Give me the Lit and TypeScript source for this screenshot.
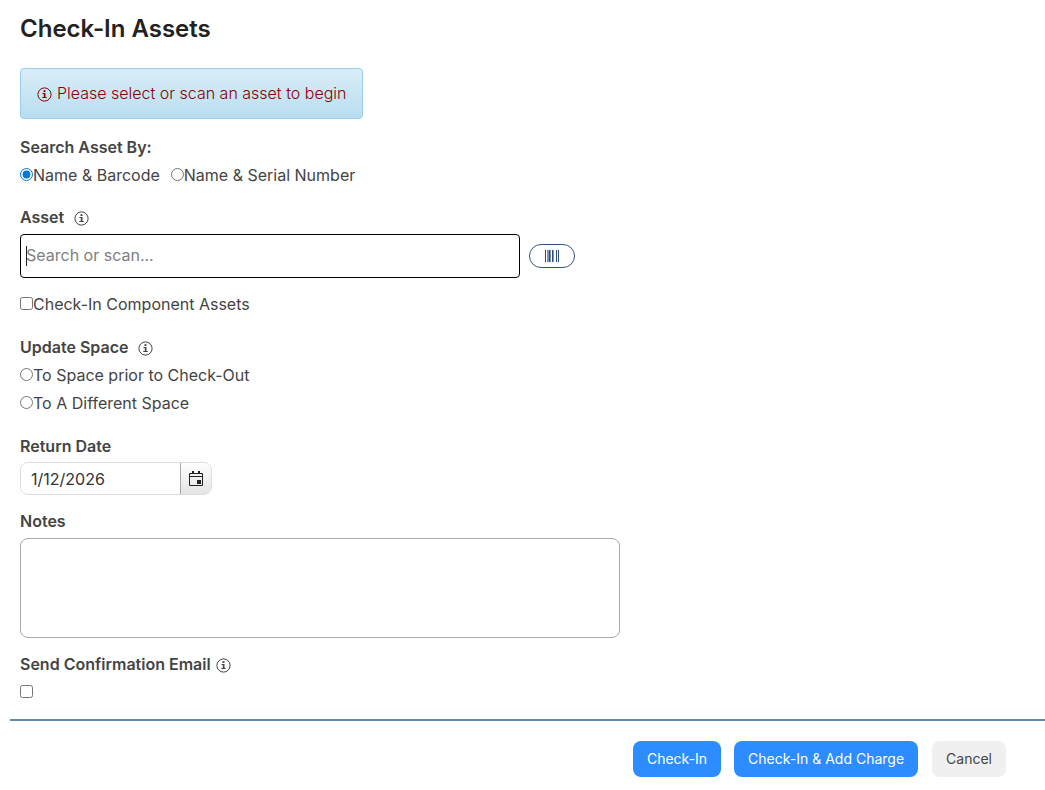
import { LitElement, html, css } from "lit";
import { customElement, state } from "lit/decorators.js";

@customElement("info-icon")
class InfoIcon extends LitElement {
  static styles = css`
    :host {
      display: inline-flex;
      color: inherit;
    }
    .glyph {
      display: block;
      width: 15px;
      height: 15px;
    }
  `;

  render() {
    return html`<svg class="glyph" viewBox="0 0 15 15" fill="none" aria-hidden="true">
      <circle cx="7.5" cy="7.5" r="6.6" stroke="currentColor" stroke-width="1" />
      <rect x="6.500" y="3.200" width="2" height="1.800" fill="currentColor" />
      <path d="M5.500 6H8.500V10H9.700V11H5.300V10H6.800V7H5.500Z" fill="currentColor" />
    </svg>`;
  }
}

@customElement("app-root")
class AppRoot extends LitElement {
  @state() private searchBy = "barcode";

  static styles = css`
    :host {
      display: block;
      font-family: Inter, "Liberation Sans", sans-serif;
      font-size: 16px;
      line-height: 28px;
      color: #444;
      background: #fff;
    }
    * {
      box-sizing: border-box;
    }
    .content {
      display: flex;
      flex-direction: column;
      padding: 13px 20px 13px;
    }
    .title {
      margin: 0 0 23px;
      font-size: 24px;
      line-height: 32px;
      font-weight: 600;
      color: #222;
    }
    .notice {
      display: flex;
      align-items: center;
      align-self: flex-start;
      gap: 5px;
      margin: 0 0 14px;
      padding: 10px 16px 11px;
      border: 1px solid #9acfea;
      border-radius: 4px;
      background: linear-gradient(#d9edf7, #b9def0);
      font-weight: 300;
      color: #8b0000;
    }
    .notice info-icon,
    .heading info-icon {
      position: relative;
      top: 1px;
    }
    .group {
      margin: 0 0 14px;
      padding: 0;
      border: 0;
      min-width: 0;
    }
    .heading {
      display: flex;
      align-items: center;
      gap: 10px;
      font-weight: 600;
    }
    .heading.tight {
      gap: 5px;
    }
    .field {
      margin-top: 3px;
    }
    .options {
      display: flex;
      gap: 11px;
    }
    .options.stacked {
      flex-direction: column;
      gap: 0;
    }
    .option {
      display: flex;
      align-items: center;
    }
    .option input {
      width: 13px;
      height: 13px;
      margin: 0 0 2px;
      flex: none;
      accent-color: #0078d7;
    }
    .search {
      display: flex;
      align-items: center;
      gap: 9px;
    }
    .search-input {
      flex: 0 1 500px;
      min-width: 0;
      height: 44px;
      padding: 0 5px 2px;
      border: 1px solid #000;
      border-radius: 4px;
      outline: none;
      font: inherit;
      color: #444;
      background: linear-gradient(#222, #222) 5px center / 1px 20px no-repeat #fff;
    }
    .search-input::placeholder {
      color: #808080;
      opacity: 1;
    }
    .scan {
      display: flex;
      align-items: center;
      justify-content: center;
      width: 46px;
      height: 24px;
      padding: 0;
      border: 1px solid #2f5683;
      border-radius: 12px;
      background: #fff;
      color: #2f4f7a;
    }
    .component {
      margin: 12px 0 15px;
    }
    .date {
      display: flex;
      width: 192px;
      height: 33px;
      margin-top: 2px;
      border: 1px solid #dcdcdc;
      border-radius: 8px;
      overflow: hidden;
    }
    .date-input {
      flex: 1;
      min-width: 0;
      padding: 0 10px;
      border: 0;
      outline: none;
      font: inherit;
      color: #333;
      background: #fff;
    }
    .date-button {
      display: flex;
      align-items: center;
      justify-content: center;
      width: 31px;
      padding: 0;
      border: 0;
      border-left: 1px solid #aaa;
      background: linear-gradient(#fdfdfd, #e4e4e4);
      color: #222;
    }
    .notes {
      display: block;
      width: 100%;
      max-width: 600px;
      height: 100px;
      padding: 8px;
      border: 1px solid #aaa;
      border-radius: 8px;
      outline: none;
      resize: none;
      font: inherit;
      color: #333;
    }
    .space {
      margin-bottom: 15px;
    }
    .compact {
      margin-bottom: 12px;
    }
    .last {
      margin-bottom: 0;
    }
    .footer {
      display: flex;
      justify-content: flex-end;
      margin-left: 10px;
      padding: 20px 39px 13px 0;
      border-top: 2px solid #5b8bb7;
    }
    .button {
      height: 36px;
      padding: 0 14px;
      border: 0;
      border-radius: 8px;
      font: 400 14px/20px Inter, "Liberation Sans", sans-serif;
      color: #fff;
      background: #2d8cff;
    }
    .button + .button {
      margin-left: 13px;
    }
    .button + .plain {
      margin-left: 14px;
      color: #444;
      background: #f0f0f0;
    }
  `;

  render() {
    return html`
      <form @submit=${(e: Event) => e.preventDefault()}>
        <div class="content">
          <h1 class="title">Check-In Assets</h1>
          <div class="notice" role="status">
            <info-icon></info-icon><span>Please select or scan an asset to begin</span>
          </div>

          <div class="group" role="radiogroup" aria-labelledby="search-by">
            <div class="heading" id="search-by">Search Asset By:</div>
            <div class="options">
              ${[
                ["barcode", "Name & Barcode"],
                ["serial", "Name & Serial Number"],
              ].map(
                ([value, text]) => html`<label class="option"
                  ><input
                    type="radio"
                    name="searchBy"
                    .value=${value}
                    .checked=${this.searchBy === value}
                    @change=${() => (this.searchBy = value)}
                  />${text}</label
                >`
              )}
            </div>
          </div>

          <div class="heading"><label for="asset">Asset</label><info-icon></info-icon></div>
          <div class="search field">
            <input class="search-input" id="asset" type="text" placeholder="Search or scan..." />
            <button class="scan" type="button" aria-label="Scan barcode">
              <svg width="16" height="12" viewBox="0 0 16 12" fill="currentColor" aria-hidden="true">
                <path d="M1 0h1v12h-1zM5 0h1v12h-1zM8 0h1v12h-1zM12 0h1v12h-1zM14 0h1v12h-1z" />
                <path d="M3 0h2v12h-2zM6 0h1v12h-1zM9 0h1v12h-1z" opacity="0.6" />
              </svg>
            </button>
          </div>
          <div class="component options">
            <label class="option"><input type="checkbox" />Check-In Component Assets</label>
          </div>

          <div class="group space" role="radiogroup" aria-labelledby="update-space">
            <div class="heading"><span id="update-space">Update Space</span><info-icon></info-icon></div>
            <div class="options stacked">
              <label class="option"><input type="radio" name="space" />To Space prior to Check-Out</label>
              <label class="option"><input type="radio" name="space" />To A Different Space</label>
            </div>
          </div>

          <div class="group compact">
            <div class="heading"><label for="date">Return Date</label></div>
            <div class="date">
              <input class="date-input" id="date" type="text" value="1/12/2026" />
              <button class="date-button" type="button" aria-label="Open calendar">
                <svg width="14" height="15" viewBox="0 0 14 15" aria-hidden="true">
                  <path d="M.5 2.500h13v12H.5zM0 5.500h14" fill="none" stroke="currentColor" />
                  <path d="M3 0h2v3H3zM9 0h2v3H9zM8 9h4v4H8z" fill="currentColor" />
                </svg>
              </button>
            </div>
          </div>

          <div class="group compact">
            <div class="heading"><label for="notes">Notes</label></div>
            <textarea class="notes field" id="notes"></textarea>
          </div>

          <div class="group last">
            <div class="heading tight">
              <label for="email">Send Confirmation Email</label><info-icon></info-icon>
            </div>
            <div class="option"><input id="email" type="checkbox" /><span>&nbsp;</span></div>
          </div>
        </div>
        <div class="footer">
          <button class="button" type="submit">Check-In</button>
          <button class="button" type="submit">Check-In &amp; Add Charge</button>
          <button class="button plain" type="button">Cancel</button>
        </div>
      </form>
    `;
  }
}
